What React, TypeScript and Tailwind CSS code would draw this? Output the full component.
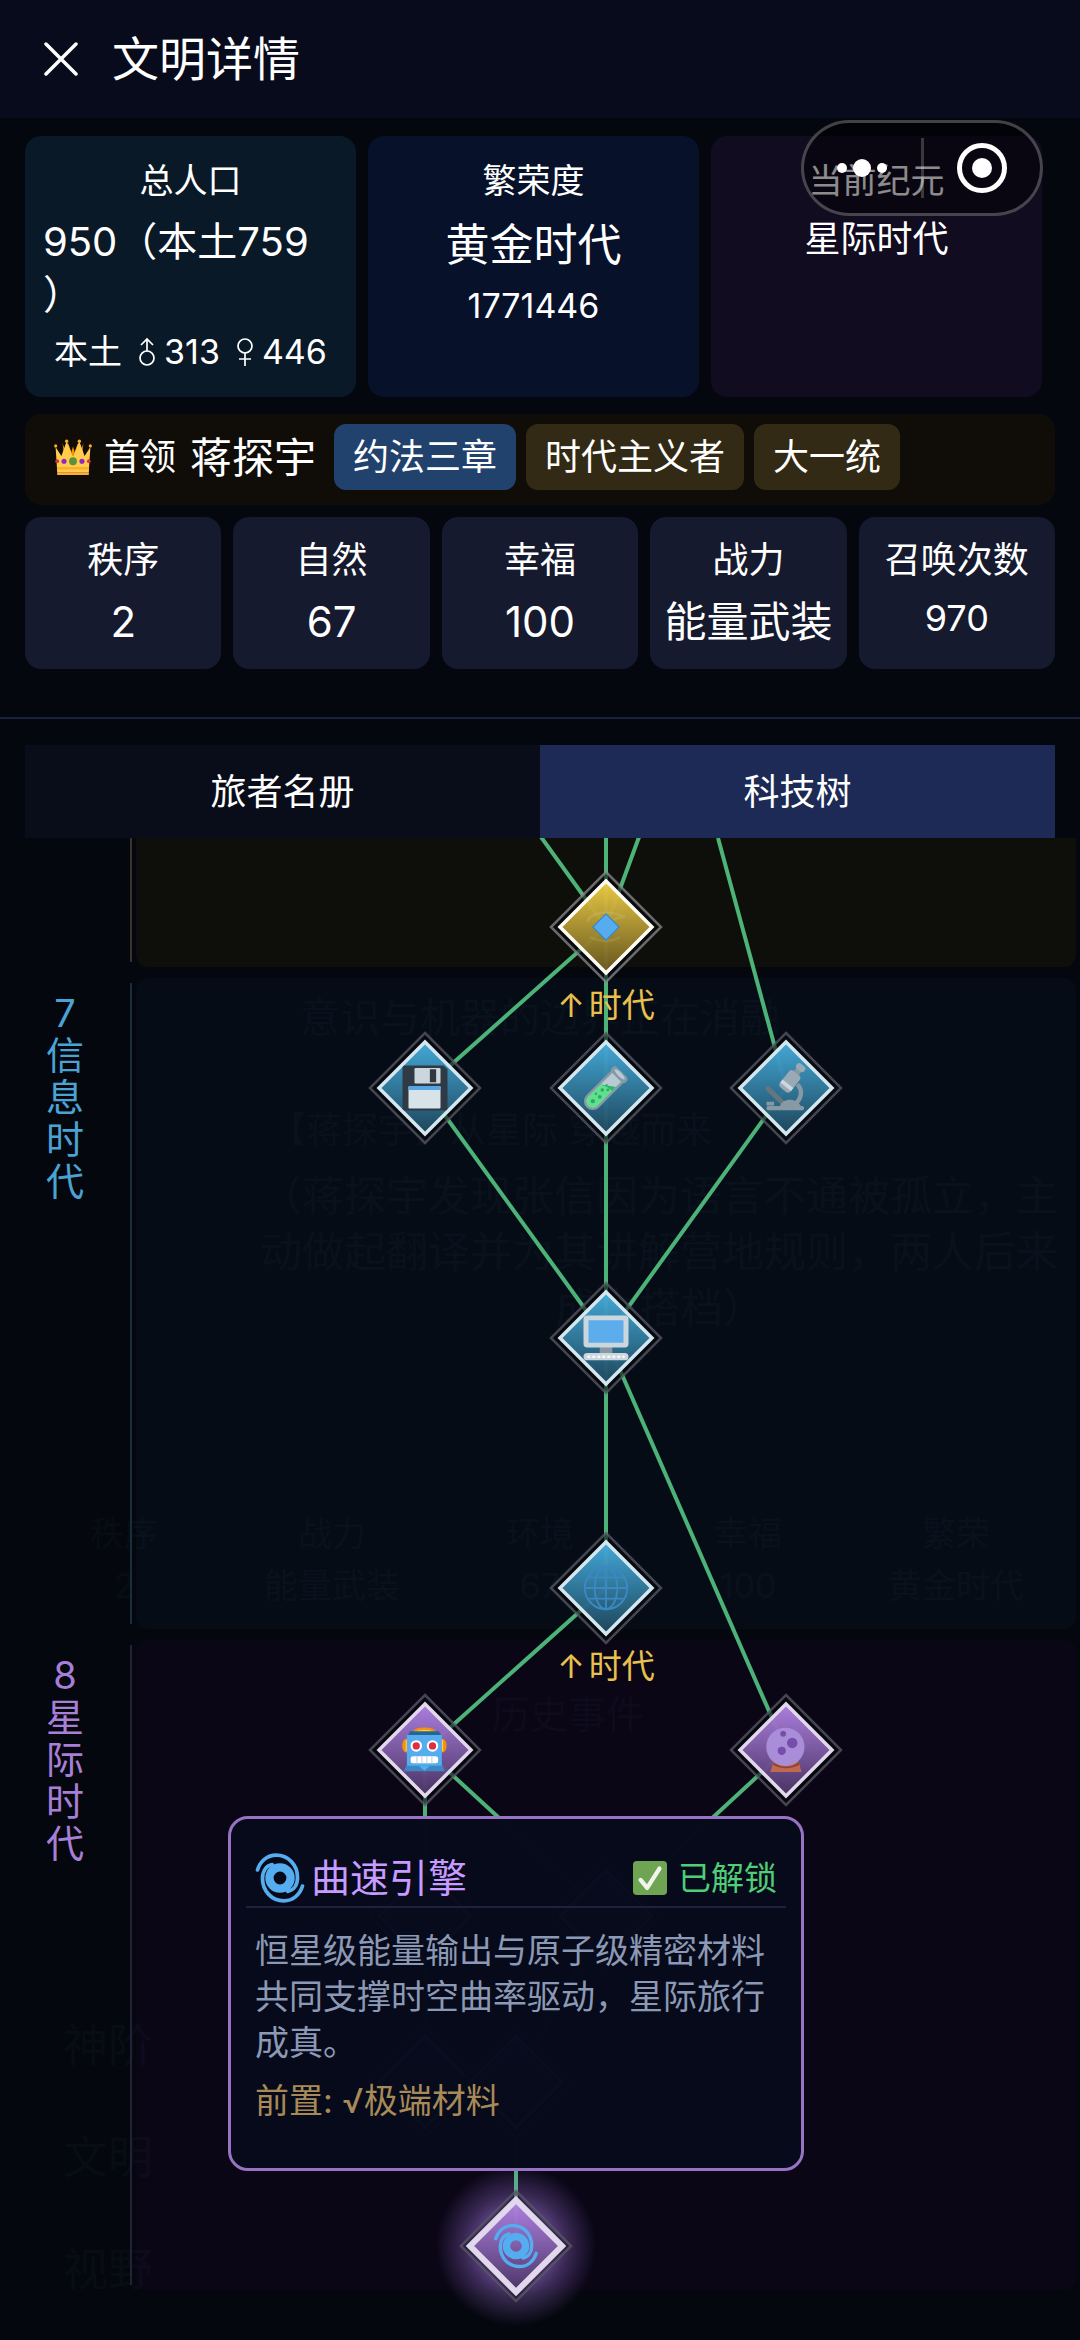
import React, { useState } from 'react';

interface TechNode {
  id: string;
  name: string;
  x: number;
  y: number;
  tone: 'gold' | 'blue' | 'purple';
  icon?: React.ReactNode;
  eraUp?: boolean;
}

interface Era {
  id: string;
  label: string[];
  height: string;
  text: string;
  line: string;
  band: string;
}

const cyclone = (
  <g fill="none" stroke="#55acee" strokeLinecap="round">
    <circle cx="18" cy="18" r="7.6" strokeWidth="6" />
    <path d="M1.8 12.2C3.8 5.6 9 1.6 15.2 1.6 24 1.6 30.6 8.6 30.6 17.6c0 5.4-2.6 9.2-7 10" strokeWidth="2.700" />
    <path d="M34.2 23.8C32.2 30.4 27 34.4 20.8 34.4 12 34.4 5.4 27.4 5.4 18.4c0-5.4 2.600-9.200 7-10" strokeWidth="2.700" />
  </g>
);

const CrownIcon = () => (
  <svg viewBox="0 0 36 36" className="h-[38px] w-[38px]">
    <path d="M12 8l3 14h6l3-14-4 7-2-7-2 7z" fill="#f4900c" />
    <path d="M8 5l2 13 8-2 8 2 2-13-4 10-1-11-5 13-5-13-1 11z" fill="#f4900c" />
    <path d="M3 31L1.5 8.500l5.500 8.500L12 3l5.500 14h1L24 3l5 14 5.500-8.500L33 31z" fill="#ffcc4d" />
    <g fill="#ffac33">
      <circle cx="1.600" cy="7.500" r="1.500" />
      <circle cx="12" cy="3" r="1.600" />
      <circle cx="24" cy="3" r="1.600" />
      <circle cx="34.400" cy="7.500" r="1.500" />
      <path d="M3 27.500h30V30H3zM3 32.500h30V35H3z" />
    </g>
    <path d="M3 30h30v2.500H3z" fill="#ffcc4d" />
    <circle cx="18" cy="22" r="3.700" fill="#5c913b" />
    <circle cx="9.500" cy="22" r="2.400" fill="#9226c0" />
    <circle cx="26.500" cy="22" r="2.400" fill="#9226c0" />
    <circle cx="3" cy="22" r="1.800" fill="#dd2e44" />
    <circle cx="33" cy="22" r="1.800" fill="#dd2e44" />
  </svg>
);

const MaleIcon = () => (
  <svg viewBox="0 0 18 30" className="h-[30px] w-[18px]" fill="none" stroke="currentColor" strokeWidth="1.700">
    <circle cx="9" cy="21" r="7" />
    <path d="M9 14V2M3 8l6-6 6 6" />
  </svg>
);

const FemaleIcon = () => (
  <svg viewBox="0 0 18 30" className="h-[30px] w-[18px]" fill="none" stroke="currentColor" strokeWidth="1.700">
    <circle cx="9" cy="9" r="7" />
    <path d="M9 16v13M3 22h12" />
  </svg>
);

const floppy = (
  <>
    <path d="M2 0h31l3 3v31a2 2 0 0 1-2 2H2a2 2 0 0 1-2-2V2a2 2 0 0 1 2-2z" fill="#2f3b44" />
    <rect x="9.6" y="2" width="20.800" height="12.400" rx="1" fill="#ccd6dd" />
    <rect x="21.900" y="3" width="5" height="10.400" fill="#31373d" />
    <rect x="4.800" y="16.300" width="25.600" height="18" rx="1" fill="#d8e2e9" />
    <path d="M5.800 16.300h23.600a1 1 0 0 1 1 1v2.200H4.800v-2.200a1 1 0 0 1 1-1z" fill="#55a4e4" />
  </>
);

const testTube = (
  <>
    <g transform="rotate(45 18 18)">
      <path d="M11 2h14v31a7 7 0 0 1-14 0z" fill="#8899a6" />
      <path d="M13 4h10v29a5 5 0 0 1-10 0z" fill="#b8cad4" />
      <path d="M13 19l10-7v21a5 5 0 0 1-10 0z" fill="#5fe08c" />
      <path d="M13 19l10-7v4l-5 1z" fill="#2fb569" />
      <rect x="10" y="0" width="16" height="6" rx="3" fill="#8899a6" />
      <ellipse cx="18" cy="2.500" rx="5.500" ry="1.600" fill="#b8cad4" />
    </g>
    <g fill="#2fa866">
      <circle cx="7.500" cy="28.500" r="1.700" />
      <circle cx="13" cy="25" r="1.500" />
      <circle cx="10" cy="22.500" r="1" />
      <circle cx="15" cy="19.500" r="1.400" />
      <circle cx="19.500" cy="19.500" r="1.100" />
      <circle cx="18.500" cy="15.500" r=".8" />
    </g>
  </>
);

const microscope = (
  <>
    <path d="M3.500 18.500l11 10.500" stroke="#66757f" strokeWidth="4" strokeLinecap="round" />
    <path d="M2.400 29h6v3h-6z" fill="#8899a6" />
    <path d="M27 15c5 5 3.500 12-3 17" stroke="#8899a6" strokeWidth="3.500" fill="none" />
    <path d="M13 33c1-7 14-8 17 0z" fill="#8899a6" />
    <rect x="2.400" y="32.300" width="30" height="3.500" rx="1.500" fill="#8899a6" />
    <g transform="rotate(38 21 12)">
      <rect x="16" y="4" width="11" height="17" rx="3" fill="#9aaab4" />
      <rect x="16" y="15" width="11" height="3" fill="#ccd6dd" />
      <rect x="19" y="0" width="5" height="4" fill="#8899a6" />
      <rect x="17.500" y="-4" width="8" height="5" rx="2" fill="#9aaab4" />
    </g>
  </>
);

const computer = (
  <>
    <path d="M13 25h10v7H13z" fill="#8899a6" />
    <rect x="0" y="0" width="36" height="25.600" rx="3" fill="#ccd6dd" />
    <rect x="4" y="3.800" width="28" height="18" fill="#5dadec" />
    <rect x="0" y="30" width="36" height="5.800" rx="2.900" fill="#ccd6dd" />
    <path d="M3 33h30" stroke="#f5f8fa" strokeWidth="2" strokeDasharray="2.500 1.500" />
  </>
);

const globe = (
  <g fill="none" stroke="#3b88c3" strokeWidth="1.500">
    <circle cx="18" cy="18" r="17" />
    <ellipse cx="18" cy="18" rx="9" ry="17" />
    <path d="M18 1v34M1 18h34M4 9.500h28M4 26.500h28" />
  </g>
);

const robot = (
  <>
    <ellipse cx="3" cy="14.500" rx="3.300" ry="5.500" fill="#f4900c" />
    <ellipse cx="32" cy="14.500" rx="3.300" ry="5.500" fill="#f4900c" />
    <path d="M2.500 10h1.500v9H2.500zM31 10h1.500v9H31z" fill="#ffcc4d" />
    <path d="M7.500 4C9 1 13 0 17.500 0S26 1 27.500 4z" fill="#f4900c" />
    <path d="M10 3.500c4-2.400 11-2.400 15 0z" fill="#ffcc4d" />
    <path d="M6 3h23l2.500 4H4z" fill="#226699" />
    <path d="M3.500 6h28v26h-28z" fill="#55acee" />
    <path d="M3 30.500h29l2 4.500H1z" fill="#3b88c3" />
    <path d="M13 30.500h9l-4.500 4z" fill="#55acee" />
    <circle cx="11" cy="14.700" r="4.600" fill="#fff" />
    <circle cx="24" cy="14.700" r="4.600" fill="#fff" />
    <circle cx="11" cy="14.700" r="2.900" fill="#dd2e44" />
    <circle cx="24" cy="14.700" r="2.900" fill="#dd2e44" />
    <rect x="6.500" y="23" width="22" height="5.600" rx="2" fill="#fff" />
    <path d="M11.500 23v5.600M15.500 23v5.600M19.500 23v5.600M23.500 23v5.600" stroke="#ccd6dd" strokeWidth="1" />
  </>
);

const crystalBall = (
  <>
    <path d="M8 27h20l2.500 8.500H5.500z" fill="#c1694f" />
    <path d="M8 27.500c5 5 15 5 20 0l.600 2c-6 4-15 4-21.200 0z" fill="#8a4633" />
    <circle cx="17.500" cy="15.500" r="15.300" fill="#aa8dd8" />
    <circle cx="15.700" cy="5" r="2.300" fill="#744eaa" />
    <circle cx="23" cy="12.300" r="4.200" fill="#744eaa" />
    <circle cx="14.600" cy="18.600" r="3.300" fill="#744eaa" />
  </>
);

const diamondSmall = (
  <>
    <path d="M3 14C5 6 20 4 33 10c-8 0-10 4-14 3M5 26c8 4 18 4 24 0" stroke="#fff" strokeOpacity=".1" strokeWidth="2" fill="none" />
    <path d="M18 7.500L28.500 18 18 28.500 7.500 18z" fill="#55acee" stroke="#3b88c3" strokeWidth="1" />
  </>
);

const nodes: TechNode[] = [
  { id: 'quantum', name: '量子', x: 360, y: 89, tone: 'gold', icon: diamondSmall, eraUp: true },
  { id: 'storage', name: '存储', x: 179, y: 250, tone: 'blue', icon: floppy },
  { id: 'biotech', name: '生物', x: 360, y: 250, tone: 'blue', icon: testTube },
  { id: 'micro', name: '显微', x: 540, y: 250, tone: 'blue', icon: microscope },
  { id: 'computer', name: '计算机', x: 360, y: 500, tone: 'blue', icon: computer },
  { id: 'internet', name: '互联网', x: 360, y: 750, tone: 'blue', icon: globe, eraUp: true },
  { id: 'robot', name: '机器人', x: 179, y: 912, tone: 'purple', icon: robot },
  { id: 'crystal', name: '预测', x: 540, y: 912, tone: 'purple', icon: crystalBall },
  { id: 'fusion', name: '聚变', x: 179, y: 1078, tone: 'purple' },
  { id: 'atom', name: '原子', x: 360, y: 1078, tone: 'purple' },
  { id: 'star', name: '恒星', x: 179, y: 1244, tone: 'purple' },
  { id: 'material', name: '极端材料', x: 270, y: 1244, tone: 'purple' },
  { id: 'warp', name: '曲速引擎', x: 270, y: 1408, tone: 'purple', icon: cyclone },
];

// [x1, y1, x2, y2] in canvas units
const edges = [
  [269, -37, 360, 89],
  [360, -60, 360, 89],
  [411, -50, 360, 89],
  [472, 0, 540, 250],
  [360, 89, 179, 250],
  [360, 89, 360, 250],
  [179, 250, 360, 500],
  [360, 250, 360, 500],
  [540, 250, 360, 500],
  [360, 500, 360, 750],
  [360, 500, 540, 912],
  [360, 750, 179, 912],
  [179, 912, 179, 1078],
  [179, 912, 360, 1078],
  [540, 912, 360, 1078],
  [179, 1078, 179, 1244],
  [360, 1078, 270, 1244],
  [270, 1244, 270, 1408],
];

const eras: Era[] = [
  {
    id: 'era6',
    label: [],
    height: 'h-[129px]',
    text: '',
    line: 'bg-[#39332a] mt-0',
    band: 'bg-[#0e0e0a] rounded-b-xl',
  },
  {
    id: 'era7',
    label: ['7', '信', '息', '时', '代'],
    height: 'h-[651px]',
    text: 'text-[#4ba3d3]',
    line: 'bg-[#14303f] mt-[5px]',
    band: 'bg-[#2f9bd0]/[0.04] rounded-xl',
  },
  {
    id: 'era8',
    label: ['8', '星', '际', '时', '代'],
    height: 'h-[650px]',
    text: 'text-[#a87fd6]',
    line: 'bg-[#242238] mt-[5px]',
    band: 'bg-[#9900cc]/[0.04] rounded-xl',
  },
];

const stats = [
  { label: '秩序', value: '2', size: 'text-[42px] leading-[56px]' },
  { label: '自然', value: '67', size: 'text-[42px] leading-[56px]' },
  { label: '幸福', value: '100', size: 'text-[42px] leading-[56px]' },
  { label: '战力', value: '能量武装', size: 'text-[42px] leading-[56px]' },
  { label: '召唤次数', value: '970', size: 'text-[36px] leading-[48px]' },
];

const tags = [
  { text: '约法三章', bg: 'bg-[#22426e]' },
  { text: '时代主义者', bg: 'bg-[#332a15]' },
  { text: '大一统', bg: 'bg-[#332a15]' },
];

function NodeShape({ node, active }: { node: TechNode; active: boolean }) {
  return (
    <svg viewBox="-84 -84 168 168" className="block h-[168px] w-[168px]">
      <defs>
        <radialGradient id="glow">
          <stop offset="0.4" stopColor="#b080f0" stopOpacity="0.55" />
          <stop offset="0.65" stopColor="#b080f0" stopOpacity="0.28" />
          <stop offset="1" stopColor="#b080f0" stopOpacity="0" />
        </radialGradient>
        <linearGradient id={`fill-${node.id}`} x1="0" y1="0" x2="0" y2="1">
          {node.tone === 'gold' && <stop offset="0" stopColor="#fbd848" />}
          {node.tone === 'gold' && <stop offset="1" stopColor="#6b5a20" />}
          {node.tone === 'blue' && <stop offset="0" stopColor="#48b4e6" />}
          {node.tone === 'blue' && <stop offset="1" stopColor="#1f4a60" />}
          {node.tone === 'purple' && <stop offset="0" stopColor="#b888ee" />}
          {node.tone === 'purple' && <stop offset="1" stopColor="#4c3566" />}
        </linearGradient>
      </defs>
      {active && <circle r="80" fill="url(#glow)" />}
      <path
        d="M0-55L55 0 0 55-55 0z"
        fill="#04060c"
        fillOpacity={active ? 0.3 : 0.6}
        stroke={node.tone === 'gold' ? '#8a898c' : '#5b5966'}
        strokeOpacity="0.75"
        strokeWidth="2.5"
      />
      <path
        d="M0-46L46 0 0 46-46 0z"
        fill={`url(#fill-${node.id})`}
        fillOpacity="0.93"
        stroke={node.tone === 'gold' ? '#fffdf5' : node.tone === 'blue' ? '#d5e6ee' : '#e2d8ec'}
        strokeWidth={active ? 6 : 3.5}
      />
      {node.icon && (
        <svg x="-22.500" y="-22.500" width="45" height="45" viewBox="0 0 36 36" overflow="visible">
          {node.icon}
        </svg>
      )}
    </svg>
  );
}

// Previous page, barely visible through the dark overlay
function Backdrop() {
  return (
    <div aria-hidden="true" className="pointer-events-none absolute inset-0 overflow-hidden pt-[990px] text-[#080c15]">
      <p className="text-center text-[40px] leading-[56px]">意识与机器的边界正在消融</p>
      <p className="mt-[56px] pl-[270px] text-[36px] leading-[56px]">【蒋探宇】从星际 穿越而来</p>
      <p className="mt-[10px] ml-[260px] w-[800px] text-[42px] leading-[56px] break-all">
        （蒋探宇发现张信因为语言不通被孤立，主动做起翻译并为其讲解营地规则，两人后来
      </p>
      <p className="pl-[555px] text-[42px] leading-[56px]">成为搭档）</p>
      <div className="mt-[172px] grid grid-cols-5 px-[20px] text-center text-[34px] leading-[52px]">
        <span>秩序</span>
        <span>战力</span>
        <span>环境</span>
        <span>幸福</span>
        <span>繁荣</span>
        <span>2</span>
        <span>能量武装</span>
        <span>67</span>
        <span>100</span>
        <span>黄金时代</span>
      </div>
      <p className="mt-[76px] pl-[492px] text-[38px] leading-[52px]">历史事件</p>
      <div className="mt-[250px] flex flex-col pl-[63px] text-[45px] leading-[112px]">
        <span>神阶</span>
        <span>文明</span>
        <span>视野</span>
      </div>
    </div>
  );
}

export default function App() {
  const [tab, setTab] = useState('tech');
  const [selected, setSelected] = useState('warp');

  const tabClass = (on: boolean) =>
    `flex-1 h-[93px] text-[36px] leading-[48px] ${on ? 'bg-[#1c2a55]' : 'bg-[#090d1a]'}`;

  return (
    <div className="relative min-h-screen overflow-hidden bg-[#05070f] text-white [font-family:Inter,'Noto_Sans_CJK_SC',sans-serif]">
      <Backdrop />

      <div className="relative">
        <header className="flex h-[118px] items-center gap-[34px] bg-[#080b1b] px-[44px]">
          <button aria-label="关闭">
            <svg viewBox="0 0 34 34" className="h-[34px] w-[34px]" stroke="white" strokeWidth="3.500" strokeLinecap="round">
              <path d="M2 2l30 30M32 2L2 32" />
            </svg>
          </button>
          <h1 className="text-[47px] leading-[60px]">文明详情</h1>
        </header>

        <div className="px-[25px] pt-[18px]">
          {/* Overview */}
          <section className="flex gap-3 pr-[13px]">
            <div className="flex flex-1 flex-col items-center rounded-2xl bg-[#091927] px-[18px] py-[22px]">
              <h2 className="mb-3 text-[34px] leading-[45px]">总人口</h2>
              <p className="w-full text-[40px] leading-[53px] break-all">950（本土759<br />）</p>
              <p className="mt-2 flex items-center text-[34px] leading-[46px] whitespace-nowrap">
                <span className="mr-4">本土</span>
                <MaleIcon />
                <span className="mr-4 ml-2">313</span>
                <FemaleIcon />
                <span className="ml-2">446</span>
              </p>
            </div>
            <div className="flex flex-1 flex-col items-center rounded-2xl bg-[#071129] px-[18px] py-[22px]">
              <h2 className="mb-3 text-[34px] leading-[45px]">繁荣度</h2>
              <p className="text-[44px] leading-[60px]">黄金时代</p>
              <p className="mt-2 text-[34px] leading-[46px]">1771446</p>
            </div>
            <div className="flex flex-1 flex-col items-center rounded-2xl bg-[#110c20] px-[18px] py-[22px]">
              <h2 className="mb-3 text-[34px] leading-[45px]">当前纪元</h2>
              <p className="text-[36px] leading-[48px]">星际时代</p>
            </div>
          </section>

          {/* Leader */}
          <section className="mt-[17px] flex items-start gap-[10px] rounded-2xl bg-[#100d09] pt-[10px] pb-[15px] pl-[29px]">
            <div className="mr-2 flex h-[66px] items-center">
              <CrownIcon />
              <span className="ml-3 text-[36px]">首领</span>
              <span className="ml-[14px] text-[42px]">蒋探宇</span>
            </div>
            {tags.map((t) => (
              <span key={t.text} className={`rounded-xl px-[19px] py-[9px] text-[36px] leading-[48px] ${t.bg}`}>
                {t.text}
              </span>
            ))}
          </section>

          {/* Stats */}
          <section className="mt-3 grid grid-cols-5 gap-3">
            {stats.map((s) => (
              <div key={s.label} className="flex h-[152px] flex-col items-center rounded-2xl bg-[#161a2e] pt-[19px] whitespace-nowrap">
                <span className="mb-[10px] text-[36px] leading-[48px]">{s.label}</span>
                <span className={s.size}>{s.value}</span>
              </div>
            ))}
          </section>
        </div>

        <div className="mt-[48px] border-t-2 border-[#18223c] px-[25px] pt-[26px]">
          <div className="flex" role="tablist">
            <button role="tab" aria-selected={tab === 'roster'} className={tabClass(tab === 'roster')} onClick={() => setTab('roster')}>
              旅者名册
            </button>
            <button role="tab" aria-selected={tab === 'tech'} className={tabClass(tab === 'tech')} onClick={() => setTab('tech')}>
              科技树
            </button>
          </div>
        </div>

        {/* Tech tree */}
        <main className="relative flex flex-col gap-[11px] overflow-hidden pb-[50px]">
          {eras.map((era) => (
            <section key={era.id} className={`flex ${era.height}`}>
              <div className={`flex w-[130px] flex-col items-center pt-[14px] text-[38px] leading-[42px] ${era.text}`}>
                {era.label.map((ch) => (
                  <span key={ch}>{ch}</span>
                ))}
              </div>
              <div className={`mb-[5px] w-[2px] ${era.line}`} />
              <div className={`mr-1 ml-1 flex-1 ${era.band}`} />
            </section>
          ))}

          <div className="absolute inset-y-0 right-1 left-[136px]">
            <div className="absolute inset-y-0 left-1/2 w-[720px] -translate-x-1/2">
              <svg className="absolute inset-0 h-full w-full overflow-visible" stroke="#53c180" strokeOpacity="0.92" strokeWidth="4">
                {edges.map(([x1, y1, x2, y2], i) => (
                  <line key={i} x1={x1} y1={y1} x2={x2} y2={y2} />
                ))}
              </svg>

              {nodes.map((node) => (
                <div
                  key={node.id}
                  className="absolute -translate-x-1/2 -translate-y-1/2"
                  style={{ left: node.x, top: node.y }}
                >
                  <button aria-label={node.name} className="block" onClick={() => setSelected(node.id)}>
                    <NodeShape node={node} active={node.id === selected} />
                  </button>
                  {node.eraUp && (
                    <span className="absolute top-[140px] left-1/2 flex -translate-x-1/2 items-center gap-1 text-[33px] leading-[44px] whitespace-nowrap text-[#e9c04e]">
                      <span>↑</span>
                      <span>时代</span>
                    </span>
                  )}
                </div>
              ))}

              {selected === 'warp' && (
                <article className="absolute top-[978px] left-[270px] h-[355px] w-[576px] -translate-x-1/2 rounded-[20px] border-[3px] border-[#9873c4] bg-[#060a1a]/[0.99] px-[15px] pt-[35px]">
                  <div className="flex h-[54px] items-center justify-between border-b-2 border-[#231f3d] px-[9px] pb-1">
                    <h3 className="flex items-center gap-[6px] text-[39px] leading-[50px] text-[#c79bff]">
                      <svg viewBox="0 0 36 36" className="h-[50px] w-[50px]">{cyclone}</svg>
                      曲速引擎
                    </h3>
                    <span className="flex items-center gap-[11px] text-[33px] leading-[50px] text-[#4fce78]">
                      <svg viewBox="0 0 36 36" className="h-[34px] w-[34px]">
                        <rect width="36" height="36" rx="4" fill="#6fa552" />
                        <path d="M8 20l7 8.500L28 8" fill="none" stroke="#f1f5ee" strokeWidth="4.500" strokeLinecap="round" strokeLinejoin="round" />
                      </svg>
                      已解锁
                    </span>
                  </div>
                  <p className="mt-[20px] px-[9px] text-[34px] leading-[46px] text-[#8c99b5]">
                    恒星级能量输出与原子级精密材料共同支撑时空曲率驱动，星际旅行成真。
                  </p>
                  <p className="mt-3 px-[9px] text-[34px] leading-[46px] text-[#a88a58]">前置: √极端材料</p>
                </article>
              )}
            </div>
          </div>
        </main>
      </div>

      {/* Mini program capsule */}
      <div className="absolute top-[120px] right-[37px] flex h-[96px] w-[242px] items-center rounded-full border-[3px] border-white/25 bg-black/45">
        <button aria-label="更多" className="flex flex-1 items-center justify-center gap-[6px]">
          <span className="h-[10px] w-[10px] rounded-full bg-white" />
          <span className="h-[18px] w-[18px] rounded-full bg-white" />
          <span className="h-[10px] w-[10px] rounded-full bg-white" />
        </button>
        <span className="h-[60px] w-[3px] bg-white/20" />
        <button aria-label="退出" className="flex flex-1 justify-center">
          <svg viewBox="0 0 50 50" className="h-[50px] w-[50px]">
            <circle cx="25" cy="25" r="22.500" fill="none" stroke="white" strokeWidth="5" />
            <circle cx="25" cy="25" r="10" fill="white" />
          </svg>
        </button>
      </div>
    </div>
  );
}
